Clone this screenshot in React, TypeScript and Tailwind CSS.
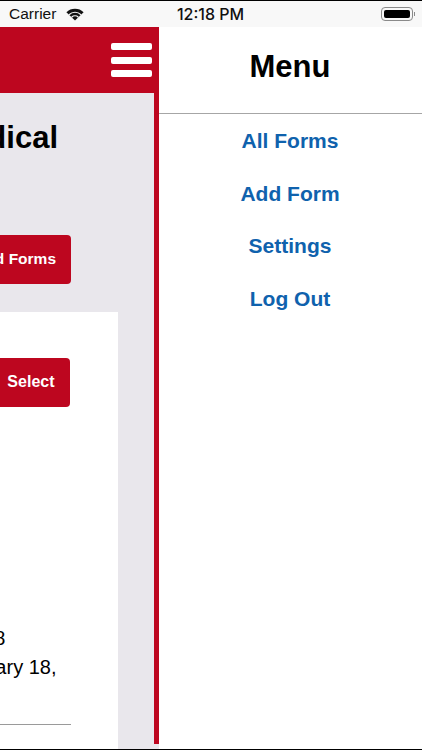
import React from "react";

const links = ["All Forms", "Add Form", "Settings", "Log Out"];

function Wifi() {
  return (
    <svg width="18" height="13" viewBox="0 0 18 13" className="ml-[10px]">
      <path d="M9 12.6 L0.4 4.2 A12.4 12.4 0 0 1 17.6 4.2 Z" fill="#111" />
      <path d="M3 6.7 A8.6 8.6 0 0 1 15 6.7" fill="none" stroke="#f8f8f8" strokeWidth="1.2" />
      <path d="M5.6 9.3 A5 5 0 0 1 12.4 9.3" fill="none" stroke="#f8f8f8" strokeWidth="1.2" />
    </svg>
  );
}

function Battery() {
  return (
    <div className="flex items-center">
      <div className="flex h-[14px] w-[32px] rounded-[4px] border border-[#8a8a8a] p-[2px]">
        <div className="flex-1 rounded-[2px] bg-black" />
      </div>
      <div className="ml-[1px] h-[4px] w-[1px] bg-[#8a8a8a]" />
    </div>
  );
}

export default function App() {
  return (
    <div className="flex h-[750px] w-[422px] flex-col overflow-hidden bg-white font-['Liberation_Sans',sans-serif] text-black">
      <div className="h-px shrink-0 bg-black" />

      {/* Status bar */}
      <div className="grid h-[26px] shrink-0 grid-cols-3 items-center bg-[#f8f8f8] pl-[9px] pr-[7px] text-[15.5px] text-[#111]">
        <div className="flex items-center">
          Carrier
          <Wifi />
        </div>
        <div className="whitespace-nowrap pr-[3px] text-center font-['Inter',sans-serif] text-[16px] font-medium">12:18 PM</div>
        <div className="flex justify-end">
          <Battery />
        </div>
      </div>

      <div className="flex min-h-0 flex-1">
        {/* Page pushed aside by the drawer */}
        <div className="flex w-[159px] shrink-0 flex-col overflow-hidden">
          <div className="flex h-[66px] shrink-0 items-start justify-end bg-[#bd061f] pr-[7px] pt-[16px]">
            <div className="flex w-[41px] flex-col gap-[6.5px]">
              <div className="h-[7px] rounded-[2px] bg-white" />
              <div className="h-[7px] rounded-[2px] bg-white" />
              <div className="h-[7px] rounded-[2px] bg-white" />
            </div>
          </div>

          <div className="flex min-h-0 flex-1 flex-col items-end bg-[#e9e7ec] pr-[5.5px]">
            <div className="-mr-[5.5px] mb-[5px] flex min-h-0 w-[calc(100%+5.5px)] flex-1 flex-col items-end border-r-[5.5px] border-[#bd061f]">
              <h1 className="mr-[96px] mt-[27px] whitespace-nowrap text-[31px] font-bold leading-[36px]">
                Medical
              </h1>
              <button className="mr-[83px] mt-[79px] flex h-[49px] w-[160px] shrink-0 items-center justify-end rounded-[4px] bg-[#bd061f] pb-[1px] pr-[15px] text-[15.5px] font-bold text-white">
                Load Forms
              </button>
              <div className="-mb-[5px] mr-[36.5px] mt-[28px] flex min-h-0 w-[200px] flex-1 flex-col items-end bg-white pr-[48px]">
                <button className="mt-[46px] flex h-[49px] w-[160px] shrink-0 items-center justify-end rounded-[4px] bg-[#bd061f] pb-[1px] pr-[15px] text-[16px] font-bold text-white">
                  Select
                </button>
                <div className="mt-[217px] w-full whitespace-nowrap text-right text-[20px] leading-[29px]">
                  <div className="pr-[64px]">2018</div>
                  <div className="pr-[13px]">February 18,</div>
                </div>
                <div className="-mr-px mt-[42px] h-px w-full shrink-0 bg-[#9a9a9a]" />
              </div>
            </div>
          </div>
        </div>

        {/* Drawer */}
        <div className="flex min-w-0 flex-1 flex-col bg-white">
          <div className="flex h-[87px] shrink-0 items-start justify-center border-b-[1.5px] border-[#a6a6a6] pr-px pt-[21px] text-[31px] font-bold leading-[38px]">
            Menu
          </div>
          <nav className="flex flex-col items-center gap-[28.7px] pr-px pt-[15px] text-[21px] font-bold leading-[24px] text-[#0f62ad]">
            {links.map((label) => (
              <a key={label} href="#">
                {label}
              </a>
            ))}
          </nav>
        </div>
      </div>

      <div className="h-px shrink-0 bg-black" />
    </div>
  );
}
